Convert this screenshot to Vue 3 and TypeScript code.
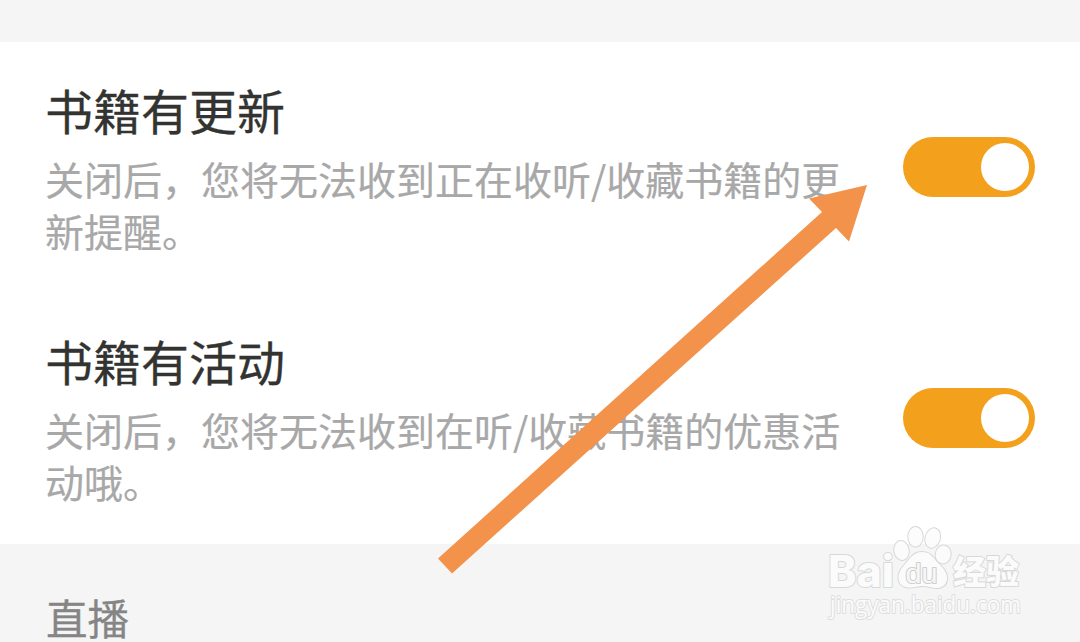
<script setup lang="ts">
interface Setting { title: string; lines: string[] }
const settings: Setting[] = [
  { title: '书籍有更新', lines: ['关闭后，您将无法收到正在收听/收藏书籍的更', '新提醒。'] },
  { title: '书籍有活动', lines: ['关闭后，您将无法收到在听/收藏书籍的优惠活', '动哦。'] },
]
</script>

<template>
  <main class="page">
    <section class="group">
      <div v-for="s in settings" :key="s.title" class="row">
        <div class="copy">
          <h2>{{ s.title }}</h2>
          <p><span v-for="l in s.lines" :key="l">{{ l }}</span></p>
        </div>
        <div class="toggle" role="switch" aria-checked="true"><i></i></div>
      </div>
    </section>
    <div class="next">直播</div>
    <svg class="overlay" width="1080" height="642" viewBox="0 0 1080 642">
      <path fill="#f2924b" d="M867 185L849 241.500L836 228L452 573.500L438 558.500L822 212L809 198.500Z" />
      <g class="mark">
        <text class="bai" x="828" y="586.500" font-size="44" textLength="66" lengthAdjust="spacingAndGlyphs">Bai</text>
        <ellipse cx="901.500" cy="550.500" rx="7.200" ry="9.500" transform="rotate(-8 901.500 550.500)" />
        <ellipse cx="915.500" cy="536.800" rx="7.200" ry="9.800" />
        <ellipse cx="932.700" cy="538" rx="7.200" ry="9.800" transform="rotate(16 932.700 538)" />
        <ellipse cx="943.200" cy="554.500" rx="7.500" ry="9" transform="rotate(10 943.200 554.500)" />
        <path d="M922 552C914 552 910 558 906 563C902 568 898.500 571 898.500 578C898.500 584 903 587.500 909 587.500C915 587.500 918 586 923 586C929 586 932 588.500 938 588C944 587 947.500 583 947 577C946 570 942 567 937 562C933 557 930 552 922 552Z" />
        <text class="du" x="905.500" y="582.500" font-size="27" textLength="32" lengthAdjust="spacingAndGlyphs">du</text>
        <text class="cn" x="953" y="584" font-size="33" textLength="66">经验</text>
        <text class="url" x="830" y="612.500" font-size="23" textLength="191" lengthAdjust="spacingAndGlyphs">jingyan.baidu.com</text>
      </g>
    </svg>
  </main>
</template>

<style>
body { margin: 0; }
</style>
<style scoped>
.page { width: 1080px; height: 642px; position: relative; overflow: hidden; background: #f5f5f5; font-family: "Noto Sans CJK SC", sans-serif; padding-top: 42px; box-sizing: border-box; }
.group { background: #fff; height: 502px; }
.row { height: 251px; display: flex; align-items: flex-start; justify-content: space-between; box-sizing: border-box; padding: 0 45px; }
.copy { padding-top: 32px; opacity: 0.999; }
h2 { margin: 0; font-size: 48px; line-height: 70px; font-weight: 400; color: #333331; white-space: nowrap; -webkit-text-stroke: 0.3px #333331; }
p { margin: 8px 0 0; font-size: 39px; line-height: 52px; color: #a8a8a8; -webkit-text-stroke: 0.2px #a8a8a8; }
p span { display: block; white-space: nowrap; }
.toggle { margin-top: 95px; width: 132px; height: 60px; border-radius: 30px; background: #f3a01c; display: flex; align-items: center; justify-content: flex-end; padding-right: 6px; box-sizing: border-box; }
.toggle i { width: 48px; height: 48px; border-radius: 50%; background: #fff; }
.next { padding: 48px 0 0 46px; font-size: 41.5px; line-height: 50px; color: #858585; -webkit-text-stroke: 0.3px #858585; opacity: 0.999; }
.overlay { position: absolute; left: 0; top: 0; }
.mark { fill: #fcfcfc; stroke: #d8d8d8; stroke-width: 2; stroke-linejoin: round; paint-order: stroke; font-family: "Liberation Sans", sans-serif; opacity: 0.99; }
.bai { font-family: Inter, "Liberation Sans", sans-serif; font-weight: 800; }
.du { fill: #f8f8f8; stroke: #cfcfcf; font-weight: 400; }
.cn { font-family: "Noto Sans CJK SC", sans-serif; font-weight: 900; }
.url { font-family: "Open Sans", sans-serif; font-weight: 400; stroke: #dedede; }
</style>
